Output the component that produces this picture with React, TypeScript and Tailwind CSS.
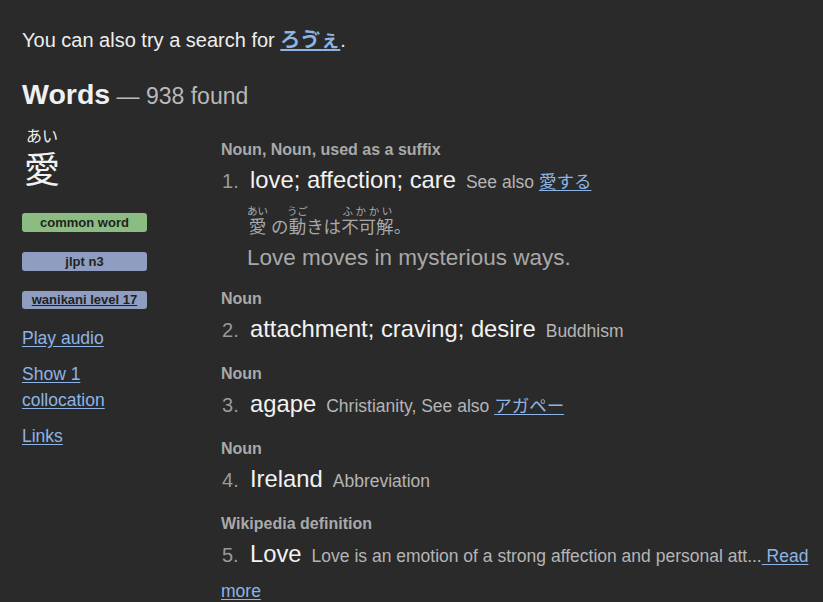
import React from "react";

const font = { fontFamily: '"Liberation Sans", Arial, "Noto Sans CJK JP", sans-serif' };

function Ruby({ base, rt }: { base: string; rt: string }) {
  return (
    <ruby className="[ruby-position:over]">
      {base}
      <rt className="text-[10.5px] text-[#aaa]">{rt}</rt>
    </ruby>
  );
}

function Sense({
  head,
  n,
  meaning,
  tags,
  children,
}: {
  head: string;
  n: number;
  meaning: string;
  tags: React.ReactNode;
  children?: React.ReactNode;
}) {
  return (
    <div className="mb-[18px]">
      <div className="text-[16px] font-bold text-[#a9a9a9] leading-[20px]">{head}</div>
      <div className="flex items-baseline mt-[5px] leading-[30px]">
        <span className="text-[20px] text-[#9a9a9a] w-[29px] pl-[1px]">{n}.</span>
        <span className="text-[23.8px] text-[#f2f2f2]">{meaning}</span>
        <span className="text-[17.5px] text-[#b5b5b5] ml-[10px]">{tags}</span>
      </div>
      {children}
    </div>
  );
}

export default function App() {
  const link = "text-[#8db4e5] underline underline-offset-[2px]";
  return (
    <div className="min-h-[602px] w-[823px] bg-[#2a2a2a] text-[#eee] overflow-hidden" style={font}>
      <div className="pl-[22px] pt-[28px]">
        <p className="text-[20px] leading-[24px] text-[#eee]">
          You can also try a search for{" "}
          <a className={link + " font-bold"}>ろゔぇ</a>.
        </p>
        <h2 className="mt-[25px] leading-[34px]">
          <span className="text-[28.5px] font-bold text-[#f0f0f0]">Words</span>
          <span className="text-[23px] text-[#b9b9b9]"> — 938 found</span>
        </h2>
        <div className="flex mt-[11px]">
          <div className="w-[199px] shrink-0">
            <div className="pl-[4px] text-[16px] leading-[20px] text-[#eee]">あい</div>
            <div className="pl-[2px] mt-[3px] text-[36px] leading-[42px] text-[#f2f2f2]">愛</div>
            <div className="mt-[21px] flex flex-col gap-[20px] w-[125px]">
              <div className="h-[19px] rounded-[3px] bg-[#8bbc82] text-[#222] text-[13px] font-bold flex items-center justify-center">
                common word
              </div>
              <div className="h-[19px] rounded-[3px] bg-[#8f9dc1] text-[#222] text-[13px] font-bold flex items-center justify-center">
                jlpt n3
              </div>
              <div className="h-[18px] rounded-[3px] bg-[#8f9dc1] text-[#222] text-[13px] font-bold flex items-center justify-center">
                <span className="underline">wanikani level 17</span>
              </div>
            </div>
            <div className="mt-[16px] text-[17.5px] leading-[26px] flex flex-col gap-[10px] w-[120px]">
              <a className={link}>Play audio</a>
              <a className={link}>Show 1 collocation</a>
              <a className={link}>Links</a>
            </div>
          </div>
          <div className="flex-1 pt-[13px]">
            <Sense
              head="Noun, Noun, used as a suffix"
              n={1}
              meaning="love; affection; care"
              tags={
                <>
                  See also <a className={link}>愛する</a>
                </>
              }
            >
              <div className="pl-[26px] mt-[8px] text-[17.5px] text-[#a8a8a8] leading-[24px]">
                <Ruby base="愛" rt="あい" /> の<Ruby base="動" rt="うご" />きは<Ruby base="不可解" rt="ふかかい" />。
              </div>
              <div className="pl-[26px] mt-[6px] mb-[2px] text-[22.5px] text-[#a8a8a8] leading-[26px]">
                Love moves in mysterious ways.
              </div>
            </Sense>
            <Sense head="Noun" n={2} meaning="attachment; craving; desire" tags="Buddhism" />
            <Sense
              head="Noun"
              n={3}
              meaning="agape"
              tags={
                <>
                  Christianity, See also <a className={link}>アガペー</a>
                </>
              }
            />
            <Sense head="Noun" n={4} meaning="Ireland" tags="Abbreviation" />
            <div>
              <div className="text-[16px] font-bold text-[#a9a9a9] leading-[20px]">Wikipedia definition</div>
              <div className="mt-[2px] leading-[35px] pr-[14px]">
                <span className="text-[20px] text-[#9a9a9a] inline-block w-[29px] pl-[1px]">5.</span>
                <span className="text-[23.8px] text-[#f2f2f2]">Love</span>
                <span className="text-[17.5px] text-[#b5b5b5] ml-[10px]">
                  Love is an emotion of a strong affection and personal att...
                  <a className={link}> Read more</a>
                </span>
              </div>
            </div>
          </div>
        </div>
      </div>
    </div>
  );
}
